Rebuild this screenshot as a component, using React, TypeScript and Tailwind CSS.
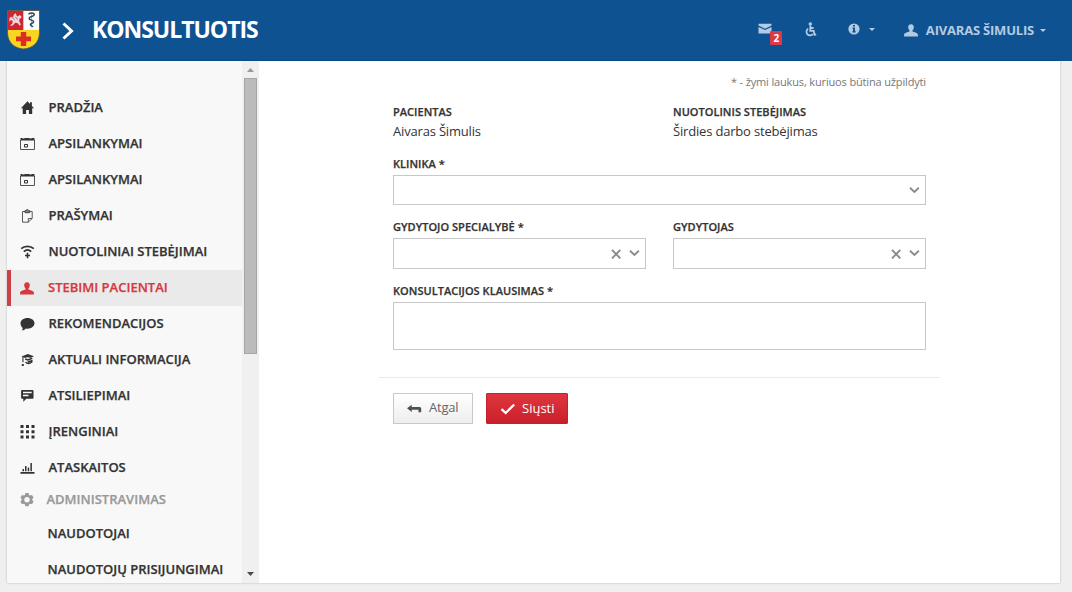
import type { ReactNode } from 'react';

function Home() {
  return (
    <svg width="16" height="16" viewBox="0 0 16 16" fill="currentColor">
      <path d="M8.500 1.300 1.900 8.300h1.800V14h3.400v-4h2.800v4h3.300V8.300h1.900L12.900 6V2.200h-1.900v1.900z" />
    </svg>
  );
}

function Calendar() {
  return (
    <svg width="16" height="16" viewBox="0 0 16 16">
      <path d="M1.500 4v9.500h14V4" fill="none" stroke="#55554f" />
      <path d="M1.500 2h2v.500h2V2h5v.500h2V2h3v2.500h-14z" fill="currentColor" />
      <path d="M5.500 8.500h3v2.500h-3z" fill="none" stroke="currentColor" />
    </svg>
  );
}

function Clipboard() {
  return (
    <svg width="16" height="16" viewBox="0 0 16 16" fill="none" stroke="#5a5855">
      <path d="M6 3.500H3.500v10.700h5.700l4-3.700v-7h-2.700" />
      <path d="M6 4.700V2.700h1.300q0-1.200 1-1.200t1 1.200h1.400v2z" fill="#888" stroke="#444" />
      <path d="M9.300 14.200v-3.700h3.800" />
    </svg>
  );
}

function Signal() {
  return (
    <svg width="16" height="16" viewBox="0 0 16 16" fill="none" stroke="currentColor" strokeWidth="1.600">
      <path d="M2.200 4.700C5.500 1.600 11.500 1.600 14.800 4.700" />
      <path d="M4.800 7.700c2.200-2.100 5.200-2.100 7.400 0" />
      <path d="M8.500 8.800v5.400M6 11.500h5" />
    </svg>
  );
}

function Person() {
  return (
    <svg width="16" height="16" viewBox="0 0 16 16" fill="currentColor">
      <path d="M8 2.200c2 0 3 1.500 2.800 3.400-.1 1.200-.6 2.200-1.300 2.900v1c1.700.700 5.400 1.300 5.400 3.300v1.600H1.100v-1.600c0-2 3.700-2.600 5.400-3.300v-1C5.800 7.800 5.300 6.800 5.200 5.600 5 3.700 6 2.200 8 2.200z" />
    </svg>
  );
}

function Bubble() {
  return (
    <svg width="16" height="16" viewBox="0 0 16 16" fill="currentColor">
      <path d="M8.500 2c4 0 7 2.300 7 5.300s-3 5.400-7 5.400c-.6 0-1.200 0-1.700-.2-.9 1.300-2.300 2-4 2 .7-.8 1-1.700.9-2.600C2.300 10.700 1.500 9.100 1.500 7.300c0-3 3-5.300 7-5.300z" />
    </svg>
  );
}

function Graduation() {
  return (
    <svg width="16" height="16" viewBox="0 0 16 16">
      <path fill="currentColor" d="M2.500 4.600 8.800 1.900 15 4.200 11.500 5.700 8 5.300 6.300 6.100z" />
      <path fill="none" stroke="currentColor" strokeWidth="1.500" d="m6.200 7 2.600 1 4.500-1.800M6.500 10.200c2 1.700 4.500 1.300 6.300-.2V8.700L8.700 10" />
      <path fill="currentColor" d="M3.400 5h1.100v5.300H3.400zM2.800 12.100h2v2h-2z" />
    </svg>
  );
}

function Feedback() {
  return (
    <svg width="16" height="16" viewBox="0 0 16 16">
      <path fill="currentColor" d="M3 2h10.600q.9 0 .9.900v6.900q0 .9-.9.900H7.300L4.300 13.800V10.700H3q-.9 0-.9-.9V2.900Q2.100 2 3 2z" />
      <path stroke="#f8f8f8" strokeWidth="1.500" d="M4 4.600h8.700M4 7.500h5.500" />
    </svg>
  );
}

function GridDots() {
  return (
    <svg width="16" height="16" viewBox="0 0 16 16" fill="currentColor">
      <path d="M1.500 1h3v3h-3zM7 1h3v3H7zM12.500 1h3v3h-3zM1.500 6.300h3v3h-3zM7 6.300h3v3H7zM12.500 6.300h3v3h-3zM1.500 11.600h3v3h-3zM7 11.600h3v3H7zM12.500 11.600h3v3h-3z" />
    </svg>
  );
}

function Chart() {
  return (
    <svg width="16" height="16" viewBox="0 0 16 16" fill="currentColor">
      <path d="M1.500 12h14v1.800h-14zM3.500 9H5v2.300H3.500zM6 6h1.500v5.300H6zM8.700 7.600h1.500v3.700H8.700zM11.400 2.900h1.500v8.400h-1.500z" />
    </svg>
  );
}

function Gear() {
  return (
    <svg width="16" height="16" viewBox="0 0 16 16">
      <path
        fill="currentColor"
        fillRule="evenodd"
        d="M6.400 1.100h3.200l.4 1.800 1.300.700 1.700-.5 1.600 2.700-1.300 1.300v1.200l1.300 1.200-1.600 2.700-1.700-.5-1.300.8-.4 1.700H6.400L6 12.500l-1.300-.8-1.700.5-1.600-2.700 1.300-1.200V7.100L1.400 5.800 3 3.100l1.700.5L6 2.900zM8 5a2.700 2.700 0 100 5.400A2.700 2.700 0 008 5z"
      />
    </svg>
  );
}

function Crest() {
  return (
    <svg width="33" height="40" viewBox="0 0 33 40">
      <path d="M.5.500h32v22c0 10-7 16-16 16.500C7.500 38.500.5 32.500.5 22.500z" fill="#f8d51e" />
      <path d="M1 1h15.500v19H1z" fill="#cc2631" />
      <path d="M16.500 1H32v19H16.500z" fill="#fdfdfd" />
      <path d="M.5.500h32v22c0 10-7 16-16 16.500C7.500 38.500.5 32.500.5 22.500z" fill="none" stroke="#5a5050" strokeWidth=".8" />
      <path d="m2.500 8 2-1.500 1.600.8.800-2.800 1.800-1.200 1 2.400 1 .800 2-1.500 1.900 1.600-.5 1.700-1.500.2-.4 2.800 1.700 3.200-1.400 1.300-1.600-2.600-2.800-.4-2 2.500-2.400.8-.2-1.100 1.900-1.600.1-2.600-1.600-.7-1.500 2z" fill="#f0d5da" />
      <path d="m3 5.500 4.500 4.200M8.500 7l2 2.500" stroke="#a94a58" strokeWidth=".8" />
      <path d="M24.600 3v14.500" stroke="#8fa1b0" strokeWidth=".8" />
      <path d="M21.500 4.200c2-1.800 6-1.500 5.700.6-.3 2-5 1.600-5 3.600s4.500 1.400 4.500 3.300c0 1.700-3.300 1.500-3.300 3 0 1.400 2 1 2.500 2.300" fill="none" stroke="#24495f" strokeWidth="1.500" />
      <path d="M13.800 22h5.400v4.400H24v4.800h-4.800V36h-5.400v-4.800H9v-4.800h4.800z" fill="#dc2d22" />
    </svg>
  );
}

function Mail() {
  return (
    <svg width="14" height="12" viewBox="0 0 14 12" fill="currentColor">
      <path d="M.5.800h13v1.700L7 5.700.5 2.500zM.5 3.900 7 7.100l6.500-3.200v6.700H.5z" />
    </svg>
  );
}

function Wheelchair() {
  return (
    <svg width="13" height="15" viewBox="0 0 13 15" fill="none" stroke="currentColor" strokeWidth="1.800">
      <circle cx="6.300" cy="1.900" r="1.700" fill="currentColor" stroke="none" />
      <path d="M6.300 3.500v5.300h3.400l.9 4 1.600-.4M6.300 6h3.300" />
      <path d="M4.100 6.800a3.600 3.600 0 1 0 4.900 5.100" />
    </svg>
  );
}

function Info() {
  return (
    <svg width="12" height="12" viewBox="0 0 12 12">
      <circle cx="6" cy="6" r="5.600" fill="currentColor" />
      <path d="M5 2h2v1.600H5zM4.400 4.500H7v3.800h.8v1.100H4.300V8.300H5V5.600h-.6z" fill="#0f5493" />
    </svg>
  );
}

function Caret() {
  return (
    <svg width="6" height="3" viewBox="0 0 6 3" fill="currentColor">
      <path d="M0 0h6L3 3z" />
    </svg>
  );
}

function Chevron() {
  return (
    <svg width="12" height="8" viewBox="0 0 12 8" fill="none" stroke="#8a8a8a" strokeWidth="1.900">
      <path d="M2 1.800 6.400 5.900 10.800 1.800" />
    </svg>
  );
}

function Cross() {
  return (
    <svg width="10" height="10" viewBox="0 0 10 10" fill="none" stroke="#8a8a8a" strokeWidth="1.900">
      <path d="m1 .8 8.300 8.600M9.300.800 1 9.400" />
    </svg>
  );
}

const items: { icon: ReactNode; label: string; active?: boolean }[] = [
  { icon: <Home />, label: 'PRADŽIA' },
  { icon: <Calendar />, label: 'APSILANKYMAI' },
  { icon: <Calendar />, label: 'APSILANKYMAI' },
  { icon: <Clipboard />, label: 'PRAŠYMAI' },
  { icon: <Signal />, label: 'NUOTOLINIAI STEBĖJIMAI' },
  { icon: <Person />, label: 'STEBIMI PACIENTAI', active: true },
  { icon: <Bubble />, label: 'REKOMENDACIJOS' },
  { icon: <Graduation />, label: 'AKTUALI INFORMACIJA' },
  { icon: <Feedback />, label: 'ATSILIEPIMAI' },
  { icon: <GridDots />, label: 'ĮRENGINIAI' },
  { icon: <Chart />, label: 'ATASKAITOS' },
];

function Header() {
  return (
    <header className="flex h-[61px] shrink-0 bg-[#0f5292] text-[#b3cbe2]">
      <div className="mt-[10px] ml-[7px] w-[33px]">
        <Crest />
      </div>
      <svg className="mt-[22px] ml-[22px]" width="13" height="18" viewBox="0 0 13 18" fill="none" stroke="#fff" strokeWidth="3">
        <path d="m1.500 1.500 8 7.500-8 7.500" />
      </svg>
      <h1 className="mt-[13px] ml-[17px] text-[23px] leading-[32px] font-bold tracking-[-1.02px] text-white">KONSULTUOTIS</h1>
      <div className="mr-[26px] ml-auto flex">
        <div className="relative mt-[23px] h-[22px] w-[25px]">
          <Mail />
          <span className="absolute top-[8px] left-[12px] flex h-[14px] w-[12px] items-center justify-center rounded-[1px] bg-[#d93a48] text-[10px] font-bold text-white">2</span>
        </div>
        <div className="mt-[22px] ml-[21px]"><Wheelchair /></div>
        <div className="mt-[23px] ml-[31px]"><Info /></div>
        <div className="mt-[28px] ml-[9px]"><Caret /></div>
        <div className="mt-[22px] ml-[28px]"><Person /></div>
        <span className="mt-[20px] ml-[6.500px] text-[13px] leading-[20px] font-bold tracking-[-0.2px]">AIVARAS ŠIMULIS</span>
        <div className="mt-[29px] ml-[6px]"><Caret /></div>
      </div>
    </header>
  );
}

function Sidebar() {
  return (
    <aside className="flex w-[252px] shrink-0 bg-[#f8f8f8]">
      <nav className="w-[235px] pt-[29px] text-[13px] font-semibold whitespace-nowrap text-[#333] [-webkit-text-stroke:0.25px_currentColor]">
        {items.map((item, i) => (
          <a
            key={i}
            className={
              item.active
                ? 'flex h-9 items-center border-l-[4px] border-[#cf3f46] bg-[#eaeaea] pl-[8px] text-[#d5393f]'
                : 'flex h-9 items-center pl-[12px]'
            }
          >
            {item.icon}
            <span className={item.active ? 'ml-[13px] pb-px' : 'ml-[13.5px] pb-px'}>{item.label}</span>
          </a>
        ))}
        <a className="flex h-[28px] items-center pl-[12px] text-[#999]">
          <Gear />
          <span className="ml-[11.5px] pb-px">ADMINISTRAVIMAS</span>
        </a>
        <a className="mt-[2px] flex h-9 items-center pb-px pl-[40.500px]">NAUDOTOJAI</a>
        <a className="flex h-9 items-center pb-px pl-[40.500px]">NAUDOTOJŲ PRISIJUNGIMAI</a>
      </nav>
      <div className="flex w-[17px] flex-col items-center bg-[#f0f0f0]">
        <svg className="mt-[7px]" width="7" height="4" viewBox="0 0 7 4"><path d="M0 4 3.500 0 7 4z" fill="#999" /></svg>
        <div className="mt-[6px] h-[276px] w-[13px] border border-[#a5a5a5] bg-[#bbb]" />
        <svg className="mt-auto mb-[7px]" width="7" height="4" viewBox="0 0 7 4"><path d="M0 0h7L3.500 4z" fill="#4a4a4a" /></svg>
      </div>
    </aside>
  );
}

function Label({ children }: { children: ReactNode }) {
  return (
    <div className="text-[11px] leading-[16px] font-semibold tracking-[0.03px] [-webkit-text-stroke:0.25px_currentColor]">
      {children}
    </div>
  );
}

function Select({ label, clear, height }: { label: string; clear?: boolean; height: string }) {
  return (
    <div className="flex flex-1 flex-col">
      <Label>{label}</Label>
      <div className={`mt-[3px] flex items-center justify-end gap-[7px] border border-[#c8c8c8] pr-[5px] ${height}`}>
        {clear && <span className="pt-px"><Cross /></span>}
        <span className={clear ? 'pb-px' : ''}><Chevron /></span>
      </div>
    </div>
  );
}

function Form() {
  return (
    <main className="flex-1 bg-white">
      <div className="ml-[134px] w-[533px] pt-[13px]">
        <p className="text-right text-[11px] leading-[16px] tracking-[-0.15px] text-[#777]">* - žymi laukus, kuriuos būtina užpildyti</p>
        <div className="mt-[14px] grid grid-cols-2 gap-[27px]">
          <div>
            <Label>PACIENTAS</Label>
            <div className="mt-[1px] text-[13px] leading-[20px] tracking-[-0.18px]">Aivaras Šimulis</div>
          </div>
          <div>
            <Label>NUOTOLINIS STEBĖJIMAS</Label>
            <div className="mt-[1px] text-[13px] leading-[20px] tracking-[-0.18px]">Širdies darbo stebėjimas</div>
          </div>
        </div>
        <div className="mt-[15px] flex"><Select label="KLINIKA *" height="h-[30px]" /></div>
        <div className="mt-[14px] flex gap-[27px]">
          <Select label="GYDYTOJO SPECIALYBĖ *" clear height="h-[31px]" />
          <Select label="GYDYTOJAS" clear height="h-[31px]" />
        </div>
        <div className="mt-[14px]"><Label>KONSULTACIJOS KLAUSIMAS *</Label></div>
        <div className="mt-[3px] h-[48px] border border-[#c8c8c8]" />
        <div className="-mx-[14px] mt-[27px] h-px bg-[#eaeaea]" />
        <div className="mt-[15px] flex gap-[13px]">
          <button className="flex h-[31px] w-[80px] items-center border border-[#c8c8c8] bg-linear-to-b from-white to-[#eee] pl-[13px] text-[13px] tracking-[-0.2px] text-[#666]">
            <svg width="15" height="9" viewBox="0 0 15 9" fill="#4d524c">
              <path d="M0 4.300 4.700.700v2.200h8q1.500 0 1.500 1.500v3.800h-2.700V5.700H4.700V8z" />
            </svg>
            <span className="ml-[7px] pb-[2px]">Atgal</span>
          </button>
          <button className="flex h-[31px] w-[82px] items-center rounded-[1px] border border-[#c4202b] bg-linear-to-b from-[#df353f] to-[#c91f2a] pl-[13px] text-[13px] font-medium text-white">
            <svg width="16" height="12" viewBox="0 0 16 12" fill="none" stroke="#fff" strokeWidth="2.300">
              <path d="m1.500 6.200 4.200 3.800 8.500-8.500" />
            </svg>
            <span className="ml-[6px]">Siųsti</span>
          </button>
        </div>
      </div>
    </main>
  );
}

export default function App() {
  return (
    <div className="flex h-[592px] w-[1072px] flex-col overflow-hidden bg-[#efefef] font-['Open_Sans',sans-serif] text-[#333]">
      <Header />
      <div className="ml-[7px] flex h-[522px] w-[1053px] shadow-[0_0_2px_rgba(0,0,0,0.25)]">
        <Sidebar />
        <Form />
      </div>
    </div>
  );
}
